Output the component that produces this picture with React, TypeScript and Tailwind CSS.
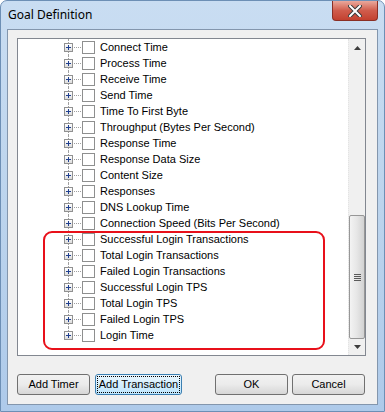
import React from 'react';

const items = [
  'Connect Time',
  'Process Time',
  'Receive Time',
  'Send Time',
  'Time To First Byte',
  'Throughput (Bytes Per Second)',
  'Response Time',
  'Response Data Size',
  'Content Size',
  'Responses',
  'DNS Lookup Time',
  'Connection Speed (Bits Per Second)',
  'Successful Login Transactions',
  'Total Login Transactions',
  'Failed Login Transactions',
  'Successful Login TPS',
  'Total Login TPS',
  'Failed Login TPS',
  'Login Time',
];

const ui = { fontFamily: '"Liberation Sans", Arial, sans-serif' };

function TreeRow({ label, last }: { label: string; last: boolean }) {
  return (
    <div className="flex h-[16px] items-center">
      {/* tree line + expander */}
      <div className="relative ml-[46px] h-full w-[9px]">
        <div
          className={`absolute left-[4px] top-0 w-px border-l border-dotted border-[#a0a0a0] ${last ? 'h-[8px]' : 'h-full'}`}
        />
        <div className="absolute left-0 top-[4px] flex h-[9px] w-[9px] items-center justify-center border border-[#919191] bg-gradient-to-b from-white to-[#dcdcdc]">
          <div className="relative h-[5px] w-[5px]">
            <div className="absolute left-0 top-[2px] h-px w-[5px] bg-[#1f3f8f]" />
            <div className="absolute left-[2px] top-0 h-[5px] w-px bg-[#1f3f8f]" />
          </div>
        </div>
      </div>
      <div className="ml-[1px] w-[7px] border-t border-dotted border-[#a0a0a0]" />
      <div className="ml-[1px] h-[13px] w-[13px] border border-[#8e8f8f] bg-white" />
      <span className="ml-[5px] whitespace-nowrap text-[11px] leading-[16px] text-black" style={ui}>
        {label}
      </span>
    </div>
  );
}

function Btn({ label, w, focused }: { label: string; w: string; focused?: boolean }) {
  return (
    <button
      className={`${w} h-[21px] whitespace-nowrap rounded-[3px] border text-[11px] leading-none text-black ${
        focused
          ? 'border-[#3c7fb1] bg-gradient-to-b from-[#eaf6fd] to-[#bee6fd] p-[1px]'
          : 'border-[#707070] bg-gradient-to-b from-[#f2f2f2] via-[#ebebeb] to-[#d6d6d6]'
      }`}
      style={ui}
    >
      {focused ? (
        <span className="flex h-full w-full items-center justify-center whitespace-nowrap border border-dotted border-black">
          {label}
        </span>
      ) : (
        label
      )}
    </button>
  );
}

export default function App() {
  return (
    <div className="relative h-[412px] w-[385px] overflow-hidden rounded-t-[7px] border border-[#6d8fb5] bg-gradient-to-b from-[#c9ddf2] via-[#bcd4ed] to-[#aecaea]">
      {/* Title bar */}
      <div className="flex h-[28px] items-start justify-between">
        <span
          className="ml-[7px] mt-[6px] text-[12px] leading-[16px] text-black"
          style={{ fontFamily: '"Noto Sans", "Open Sans", sans-serif' }}
        >
          Goal Definition
        </span>
        <div className="mr-[6px] flex h-[20px] w-[46px] items-center justify-center rounded-b-[4px] border border-t-0 border-[#8a2f25] bg-gradient-to-b from-[#e9a89c] via-[#d05c4c] to-[#c2402f]">
          <svg width="14" height="12" viewBox="0 0 14 12">
            <path d="M2 1 L12 11 M12 1 L2 11" stroke="#3a3a3a" strokeWidth="4" strokeLinecap="square" />
            <path d="M2 1 L12 11 M12 1 L2 11" stroke="#ffffff" strokeWidth="2" strokeLinecap="square" />
          </svg>
        </div>
      </div>

      {/* Client area */}
      <div className="ml-[6px] h-[376px] w-[371px] border border-[#8396ad] bg-[#f0f0f0] pl-[9px] pt-[8px]">
        <div className="relative flex h-[318px] w-[349px] border border-[#828790] bg-white">
          <div className="flex-1 overflow-hidden">
            {items.map((it, i) => (
              <TreeRow key={it} label={it} last={i === items.length - 1} />
            ))}
          </div>

          {/* Scrollbar */}
          <div className="flex w-[17px] flex-col border-l border-dotted border-[#e3e3e3] bg-[#f0f0f0]">
            <div className="flex h-[17px] items-center justify-center">
              <svg width="7" height="4" viewBox="0 0 7 4">
                <path d="M3.5 0 L7 4 L0 4 Z" fill="#3d3d3d" />
              </svg>
            </div>
            <div className="h-[159px]" />
            <div className="flex h-[124px] items-center justify-center rounded-[2px] border border-[#979797] bg-gradient-to-r from-[#f3f3f3] via-[#e6e6e6] to-[#d2d2d2]">
              <div className="flex flex-col gap-[1px]">
                <div className="h-px w-[7px] bg-[#5a5a5a]" />
                <div className="h-px w-[7px] bg-[#5a5a5a]" />
                <div className="h-px w-[7px] bg-[#5a5a5a]" />
                <div className="h-px w-[7px] bg-[#5a5a5a]" />
              </div>
            </div>
            <div className="flex flex-1 items-center justify-center">
              <svg width="7" height="4" viewBox="0 0 7 4">
                <path d="M0 0 L7 0 L3.5 4 Z" fill="#3d3d3d" />
              </svg>
            </div>
          </div>

          {/* Highlight */}
          <div className="pointer-events-none absolute left-[25px] top-[192px] h-[119px] w-[282px] rounded-[9px] border-2 border-[#e8101a]" />
        </div>

        {/* Buttons */}
        <div className="mt-[18px] flex items-center">
          <Btn label="Add Timer" w="w-[73px]" />
          <div className="w-[5px]" />
          <Btn label="Add Transaction" w="w-[87px]" focused />
          <div className="w-[33px]" />
          <Btn label="OK" w="w-[73px]" />
          <div className="w-[4px]" />
          <Btn label="Cancel" w="w-[73px]" />
        </div>
      </div>
    </div>
  );
}
